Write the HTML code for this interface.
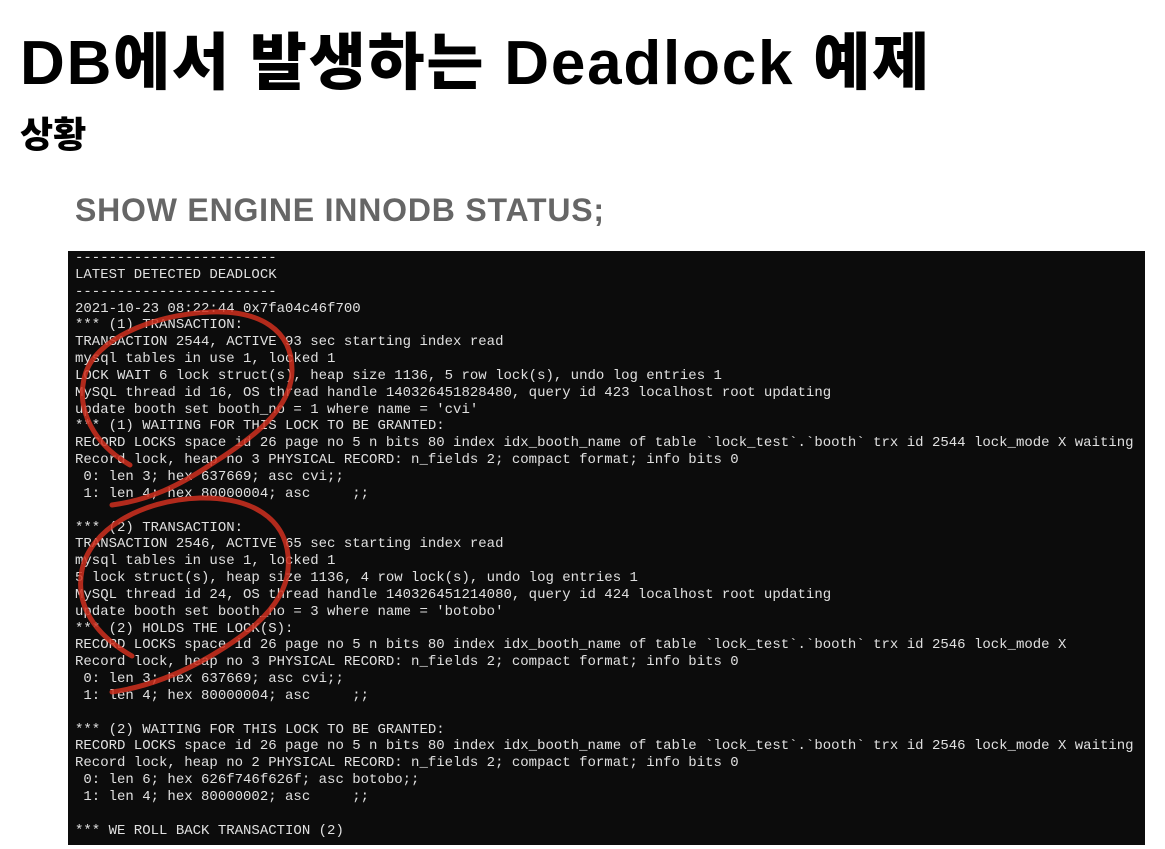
<!DOCTYPE html>
<html><head><meta charset="utf-8"><style>
body{margin:0;width:1165px;height:849px;background:#fff;position:relative;overflow:hidden;font-family:"Liberation Sans","Noto Sans CJK KR",sans-serif}
.t{position:absolute;left:20px;top:12px;font-size:62px;font-weight:900;color:#000;letter-spacing:1.8px;white-space:nowrap}
.s{position:absolute;left:20px;top:106px;font-size:36px;font-weight:900;color:#000}
.c{position:absolute;left:75px;top:192px;font-size:32px;font-weight:700;color:#666;letter-spacing:0.8px;white-space:nowrap}
.term{position:absolute;left:68px;top:251px;width:1077px;height:594px;background:#0c0c0c}
pre{position:absolute;left:75px;top:250px;margin:0;font-family:"Liberation Mono",monospace;font-size:14px;line-height:16.85px;color:#e0e0e0;letter-spacing:0}
svg{position:absolute;left:0;top:0}
</style></head><body>
<div class="t">DB에서 발생하는 Deadlock 예제</div>
<div class="s">상황</div>
<div class="c">SHOW ENGINE INNODB STATUS;</div>
<div class="term"></div>
<pre>------------------------
LATEST DETECTED DEADLOCK
------------------------
2021-10-23 08:22:44 0x7fa04c46f700
*** (1) TRANSACTION:
TRANSACTION 2544, ACTIVE 93 sec starting index read
mysql tables in use 1, locked 1
LOCK WAIT 6 lock struct(s), heap size 1136, 5 row lock(s), undo log entries 1
MySQL thread id 16, OS thread handle 140326451828480, query id 423 localhost root updating
update booth set booth_no = 1 where name = 'cvi'
*** (1) WAITING FOR THIS LOCK TO BE GRANTED:
RECORD LOCKS space id 26 page no 5 n bits 80 index idx_booth_name of table `lock_test`.`booth` trx id 2544 lock_mode X waiting
Record lock, heap no 3 PHYSICAL RECORD: n_fields 2; compact format; info bits 0
 0: len 3; hex 637669; asc cvi;;
 1: len 4; hex 80000004; asc     ;;

*** (2) TRANSACTION:
TRANSACTION 2546, ACTIVE 65 sec starting index read
mysql tables in use 1, locked 1
5 lock struct(s), heap size 1136, 4 row lock(s), undo log entries 1
MySQL thread id 24, OS thread handle 140326451214080, query id 424 localhost root updating
update booth set booth_no = 3 where name = 'botobo'
*** (2) HOLDS THE LOCK(S):
RECORD LOCKS space id 26 page no 5 n bits 80 index idx_booth_name of table `lock_test`.`booth` trx id 2546 lock_mode X
Record lock, heap no 3 PHYSICAL RECORD: n_fields 2; compact format; info bits 0
 0: len 3; hex 637669; asc cvi;;
 1: len 4; hex 80000004; asc     ;;

*** (2) WAITING FOR THIS LOCK TO BE GRANTED:
RECORD LOCKS space id 26 page no 5 n bits 80 index idx_booth_name of table `lock_test`.`booth` trx id 2546 lock_mode X waiting
Record lock, heap no 2 PHYSICAL RECORD: n_fields 2; compact format; info bits 0
 0: len 6; hex 626f746f626f; asc botobo;;
 1: len 4; hex 80000002; asc     ;;

*** WE ROLL BACK TRANSACTION (2)</pre>
<svg width="1165" height="849"><g fill="none" stroke="#d0301f" stroke-width="5" stroke-linecap="round" opacity="0.85">
<path d="M130 465 C95 445 75 410 85 375 C95 340 150 315 210 312 C260 310 292 330 292 370 C292 410 250 440 210 465 C180 485 150 500 112 505"/>
<path d="M132 656 C95 635 75 605 82 570 C90 530 140 500 200 498 C260 497 292 525 288 570 C284 610 240 640 200 662 C170 678 140 688 112 692"/>
</g></svg>
</body></html>
